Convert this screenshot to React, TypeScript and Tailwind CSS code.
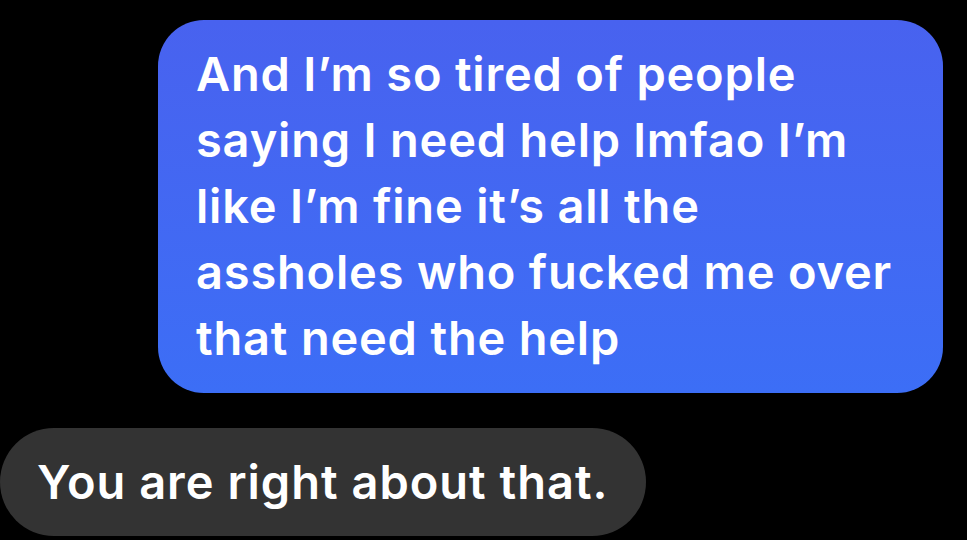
export default function App() {
  const lines = [
    "And I’m so tired of people",
    "saying I need help lmfao I’m",
    "like I’m fine it’s all the",
    "assholes who fucked me over",
    "that need the help",
  ];

  return (
    <div className="h-[540px] w-[967px] overflow-hidden bg-black font-['Inter',sans-serif] text-white">
      <div className="flex flex-col pt-5">
        <div className="ml-[158px] w-[785px] rounded-[46px] bg-gradient-to-b from-[#4862ef] to-[#3c6ef6] pb-[22px] pl-[38px] pt-[21px]">
          {lines.map((line, i) => (
            <div key={i} className="whitespace-nowrap text-[47px] font-semibold leading-[66px] tracking-[0.8px]">
              {line}
            </div>
          ))}
        </div>
        <div className="mt-[35px] w-[646px] rounded-full bg-[#333333] pb-[21px] pl-[37px] pt-[21px]">
          <div className="whitespace-nowrap text-[47px] font-semibold leading-[66px] tracking-[1px]">
            You are right about that.
          </div>
        </div>
      </div>
    </div>
  );
}
